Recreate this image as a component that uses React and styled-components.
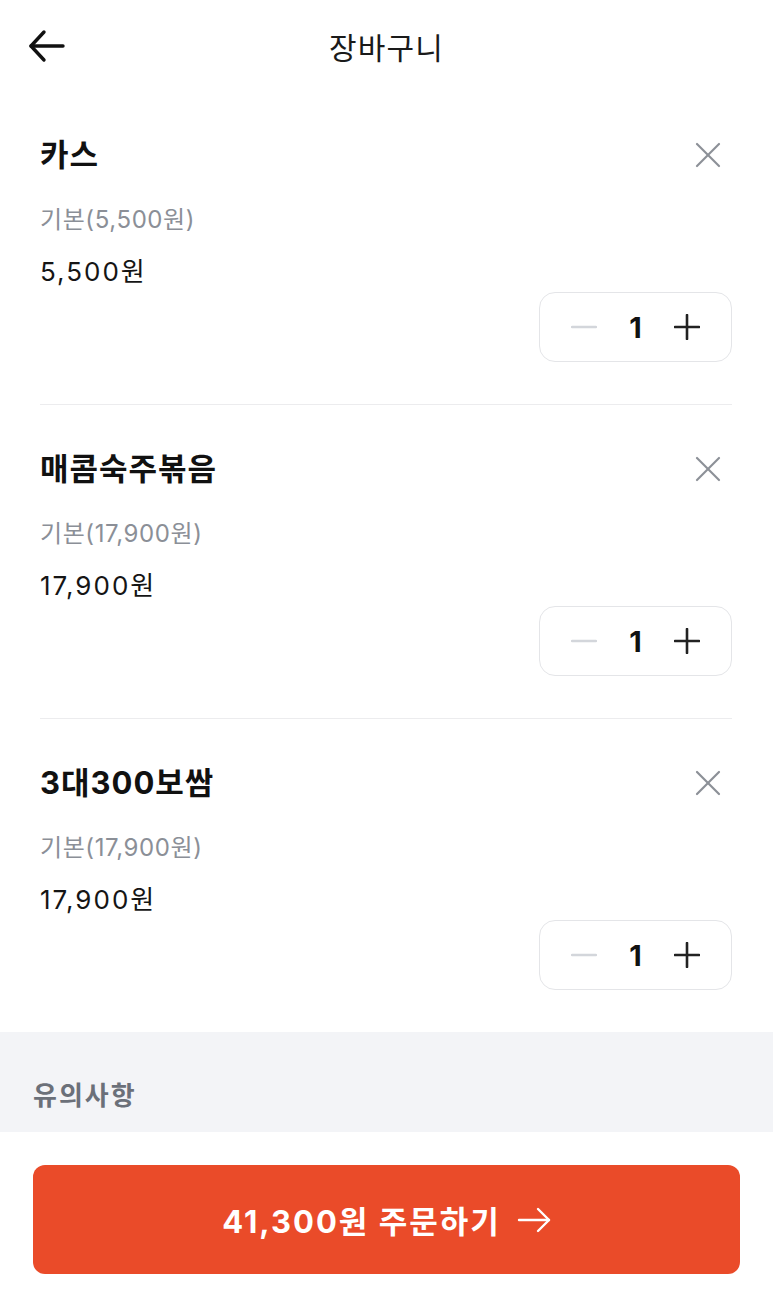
import React, { useState } from 'react'
import styled, { createGlobalStyle } from 'styled-components'

const GlobalStyle = createGlobalStyle`
  * { box-sizing: border-box; }
  html, body { margin: 0; padding: 0; background: #fff; }
  body {
    font-family: "Inter", "Noto Sans CJK KR", "Noto Sans", sans-serif;
    color: #111;
  }
`

const Page = styled.div`
  width: 773px;
  min-height: 1306px;
  display: flex;
  flex-direction: column;
  background: #fff;
`

const Header = styled.header`
  height: 91px;
  display: grid;
  grid-template-columns: 90px 1fr 90px;
  align-items: center;
`

const IconButton = styled.button`
  border: none;
  background: none;
  padding: 0;
  display: flex;
  align-items: center;
  justify-content: center;
  cursor: pointer;
  color: ${({ color }) => color || '#111'};
`

const BackButton = styled(IconButton)`
  justify-self: start;
  margin-left: 26px;
`

const Title = styled.h1`
  margin: 0;
  text-align: center;
  font-size: 30px;
  font-weight: 400;
  letter-spacing: 1.2px;
  color: #1a1a1a;
`

const List = styled.div`
  padding: 0 41px 0 40px;
`

const Item = styled.div`
  padding: 44px 0 42px;
  border-bottom: ${({ last }) => (last ? 'none' : '1px solid #ececee')};
  display: flex;
  flex-direction: column;
`

const NameRow = styled.div`
  display: flex;
  align-items: center;
  justify-content: space-between;
  height: 40px;
`

const Name = styled.div`
  font-size: 31px;
  font-weight: 700;
  letter-spacing: 1px;
  line-height: 40px;
`

const Option = styled.div`
  margin-top: 29px;
  font-size: 24px;
  line-height: 32px;
  color: #8b8f97;
  letter-spacing: 0.6px;
`

const Price = styled.div`
  margin-top: 19px;
  font-size: 26px;
  line-height: 34px;
  letter-spacing: 2px;
  color: #151515;
`

const Stepper = styled.div`
  align-self: flex-end;
  margin-top: 3px;
  width: 193px;
  height: 70px;
  border: 1.5px solid #e4e5e8;
  border-radius: 16px;
  display: grid;
  grid-template-columns: 1fr 1fr 1fr;
  align-items: center;
  padding: 0 18px;
`

const Count = styled.div`
  text-align: center;
  font-size: 29px;
  font-weight: 700;
  color: #111;
`

const Notice = styled.section`
  height: 100px;
  background: #f3f4f7;
  padding: 47px 33px 0;
`

const NoticeTitle = styled.div`
  font-size: 26px;
  line-height: 34px;
  font-weight: 700;
  color: #6b7079;
  letter-spacing: 2px;
`

const Footer = styled.footer`
  flex: 1;
  padding: 33px 33px 31px;
  background: #fff;
`

const OrderButton = styled.button`
  width: 100%;
  height: 109px;
  border: none;
  border-radius: 12px;
  background: #ea4b29;
  color: #fff;
  font-family: inherit;
  font-size: 31px;
  font-weight: 700;
  letter-spacing: 2px;
  display: flex;
  align-items: center;
  justify-content: center;
  gap: 16px;
  cursor: pointer;
`

const items = [
  { name: '카스', price: 5500 },
  { name: '매콤숙주볶음', price: 17900 },
  { name: '3대300보쌈', price: 17900 },
]

const won = (n) => n.toLocaleString('en-US') + '원'

function CartItem({ item, last }) {
  const [qty, setQty] = useState(1)
  return (
    <Item last={last}>
      <NameRow>
        <Name>{item.name}</Name>
        <IconButton color="#8c9097" style={{ marginRight: 11 }}>
          <svg width="26" height="26" viewBox="0 0 26 26" fill="none" stroke="currentColor" strokeWidth="2.2" strokeLinecap="round">
            <line x1="2" y1="2" x2="24" y2="24" />
            <line x1="24" y1="2" x2="2" y2="24" />
          </svg>
        </IconButton>
      </NameRow>
      <Option>기본({won(item.price)})</Option>
      <Price>{won(item.price * qty)}</Price>
      <Stepper>
        <IconButton color={qty > 1 ? '#222' : '#d3d6db'} onClick={() => setQty(Math.max(1, qty - 1))}>
          <svg width="26" height="26" viewBox="0 0 26 26" fill="none" stroke="currentColor" strokeWidth="2.4" strokeLinecap="round">
            <line x1="1" y1="13" x2="25" y2="13" />
          </svg>
        </IconButton>
        <Count>{qty}</Count>
        <IconButton color="#222" onClick={() => setQty(qty + 1)}>
          <svg width="26" height="26" viewBox="0 0 26 26" fill="none" stroke="currentColor" strokeWidth="2.6" strokeLinecap="round">
            <line x1="1" y1="13" x2="25" y2="13" />
            <line x1="13" y1="1" x2="13" y2="25" />
          </svg>
        </IconButton>
      </Stepper>
    </Item>
  )
}

export default function App() {
  const total = items.reduce((s, i) => s + i.price, 0)
  return (
    <>
      <GlobalStyle />
      <Page>
        <Header>
          <BackButton>
            <svg width="40" height="34" viewBox="0 0 40 34" fill="none" stroke="#111" strokeWidth="3.4" strokeLinecap="round" strokeLinejoin="round">
              <line x1="5" y1="17" x2="37" y2="17" />
              <polyline points="18,3 5,17 18,31" />
            </svg>
          </BackButton>
          <Title>장바구니</Title>
          <div />
        </Header>
        <List>
          {items.map((item, i) => (
            <CartItem key={item.name} item={item} last={i === items.length - 1} />
          ))}
        </List>
        <Notice>
          <NoticeTitle>유의사항</NoticeTitle>
        </Notice>
        <Footer>
          <OrderButton>
            {won(total)} 주문하기
            <svg width="34" height="28" viewBox="0 0 34 28" fill="none" stroke="#fff" strokeWidth="2.4" strokeLinecap="round" strokeLinejoin="round">
              <line x1="2" y1="14" x2="32" y2="14" />
              <polyline points="21,3 32,14 21,25" />
            </svg>
          </OrderButton>
        </Footer>
      </Page>
    </>
  )
}
